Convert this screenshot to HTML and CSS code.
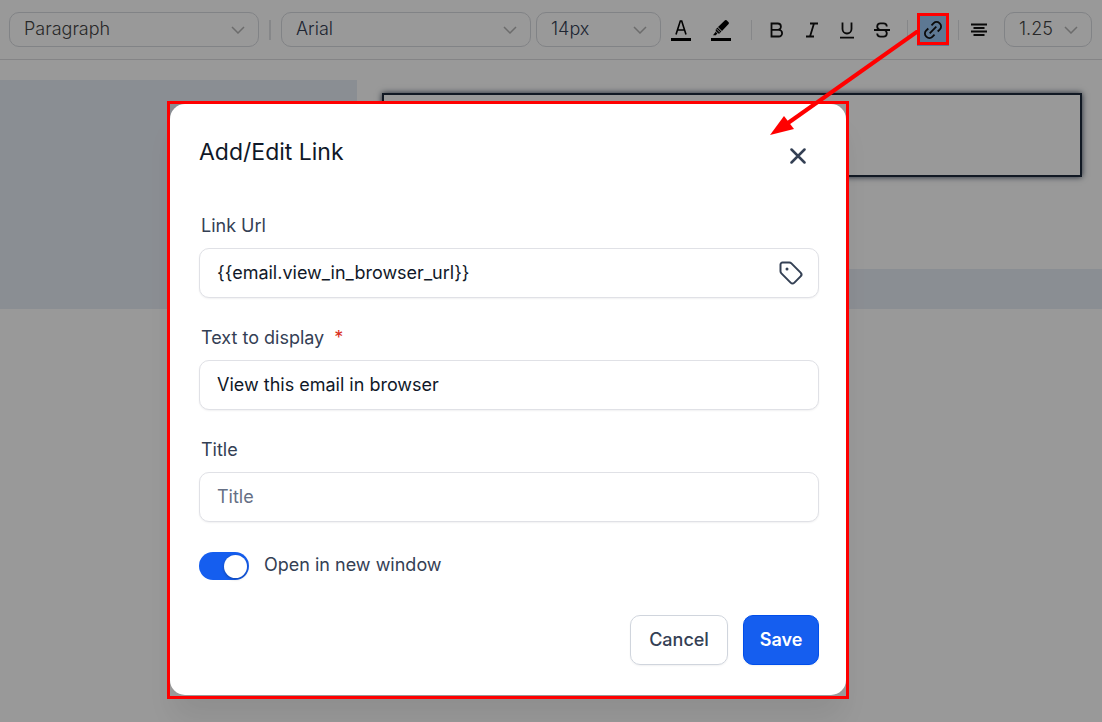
FILE: index.html
```html
<!DOCTYPE html>
<html lang="en">
<head>
<meta charset="utf-8">
<meta name="viewport" content="width=device-width, initial-scale=1">
<title>Add/Edit Link</title>
<link rel="stylesheet" href="styles.css">
</head>
<body>
<div class="toolbar" role="toolbar" aria-label="Text formatting">
  <div class="picker picker-wide">
    <select class="picker-select" aria-label="Block style"><option>Paragraph</option></select>
    <svg class="chevron" viewBox="0 0 14 8"><path d="M1 1l6 6 6-6"/></svg>
  </div>
  <span class="divider divider-block"></span>
  <div class="picker picker-wide">
    <select class="picker-select picker-ink" aria-label="Font family"><option>Arial</option></select>
    <svg class="chevron" viewBox="0 0 14 8"><path d="M1 1l6 6 6-6"/></svg>
  </div>
  <div class="picker picker-size">
    <select class="picker-select picker-ink" aria-label="Font size"><option>14px</option></select>
    <svg class="chevron" viewBox="0 0 14 8"><path d="M1 1l6 6 6-6"/></svg>
  </div>
  <div class="group">
    <button class="tool tool-color" type="button" aria-label="Text color">
      <svg width="20" height="22" viewBox="0 0 20 22"><path d="M5 15.500L9.300 2h1.400L15 15.500M6.600 11h6.800" fill="none" stroke="#000" stroke-width="1.600"/><path d="M0 19h20v3H0z"/></svg>
    </button>
    <button class="tool tool-color" type="button" aria-label="Highlight color">
      <svg width="20" height="22" viewBox="0 0 20 22"><path d="M14 1.300q.8-.8 1.600 0l2 2q.8.8 0 1.600L11 12 7 8z"/><path d="M6.400 8.600l4 4-1.800 2H6.200l-1.300 1.600H2l2.700-3.500V10.400z"/><path d="M5.400 9.800l3.800 3.800M4.300 12l2.700 2.700" stroke="#fff" stroke-width=".9"/><path d="M0 19h20v3H0z"/></svg>
    </button>
  </div>
  <span class="divider divider-marks"></span>
  <div class="group">
    <button class="tool" type="button" aria-label="Bold">
      <svg width="18" height="18" viewBox="0 0 18 18"><path d="M3.500 2.500h6.200a3.200 3.200 0 0 1 0 6.400H3.500zM3.500 8.900h7.300a3.300 3.300 0 0 1 0 6.600H3.500z" class="stroke"/></svg>
    </button>
    <button class="tool" type="button" aria-label="Italic">
      <svg width="18" height="18" viewBox="0 0 18 18"><path d="M7 2.500h8M3 15.500h8M11 2.500l-4 13" class="stroke"/></svg>
    </button>
    <button class="tool" type="button" aria-label="Underline">
      <svg width="18" height="18" viewBox="0 0 18 18"><path d="M4.500 1.500V8a4.500 4.500 0 0 0 9 0V1.500M2 16.700h14" class="stroke"/></svg>
    </button>
    <button class="tool" type="button" aria-label="Strikethrough">
      <svg width="18" height="18" viewBox="0 0 18 18"><path d="M1 9h16M13.800 5.500A3.300 3.300 0 0 0 10.500 2.300H7.500A3.300 3.300 0 0 0 4.200 5.500Q4.200 8 7 9M4.200 12.500A3.300 3.300 0 0 0 7.500 15.700h3a3.300 3.300 0 0 0 3.300-3.200q0-2.500-2.300-3.500" class="stroke"/></svg>
    </button>
  </div>
  <span class="divider divider-link"></span>
  <button class="tool tool-link" type="button" aria-label="Link" aria-pressed="true">
    <svg width="20" height="20" viewBox="0 0 20 20"><path d="M8.500 5.300l2.200-2.200a4 4 0 0 1 5.700 0l.5.500a4 4 0 0 1 0 5.700l-2.200 2.200M5.300 8.500l-2.200 2.200a4 4 0 0 0 0 5.700l.5.500a4 4 0 0 0 5.700 0l2.200-2.200M6.700 13.300l6.600-6.600" class="stroke"/></svg>
  </button>
  <span class="divider divider-align"></span>
  <button class="tool tool-align" type="button" aria-label="Align center">
    <svg width="18" height="18" viewBox="0 0 18 18"><path d="M1 3.500h16M3.500 7h11M1 10.500h16M3.500 14h11" class="stroke"/></svg>
  </button>
  <div class="picker picker-line">
    <select class="picker-select" aria-label="Line height"><option>1.25</option></select>
    <svg class="chevron" viewBox="0 0 14 8"><path d="M1 1l6 6 6-6"/></svg>
  </div>
</div>

<main class="canvas">
  <div class="sheet"><div class="block"></div></div>
</main>

<div class="overlay">
  <div class="frame">
    <form class="dialog" role="dialog" aria-modal="true" aria-labelledby="dialog-title">
      <header class="dialog-head">
        <h1 class="dialog-title" id="dialog-title">Add/Edit Link</h1>
        <button class="close" type="button" aria-label="Close">
          <svg width="16" height="16" viewBox="0 0 16 16"><path d="M1.500 1.500l13 13M14.500 1.500l-13 13"/></svg>
        </button>
      </header>
      <div class="fields">
        <div class="field">
          <label class="label" for="url">Link Url</label>
          <div class="control">
            <input class="input" id="url" type="text" value="{{email.view_in_browser_url}}">
            <button class="tag" type="button" aria-label="Insert merge tag">
              <svg width="26" height="26" viewBox="0 0 26 26"><path d="M2.500 4.500a2 2 0 0 1 2-2h6.800a3 3 0 0 1 2.100.9l9.200 9.200a2.700 2.700 0 0 1 0 3.800l-6.200 6.200a2.700 2.700 0 0 1-3.800 0l-9.200-9.200a3 3 0 0 1-.9-2.100z" fill="none" stroke="#344054" stroke-width="2"/><circle cx="9" cy="9" r="1.500" fill="#344054"/></svg>
            </button>
          </div>
        </div>
        <div class="field">
          <label class="label" for="display">Text to display <span class="required">*</span></label>
          <input class="input" id="display" type="text" value="View this email in browser" required>
        </div>
        <div class="field">
          <label class="label" for="title">Title</label>
          <input class="input" id="title" type="text" placeholder="Title">
        </div>
      </div>
      <div class="switch-row">
        <input class="switch" id="new-window" type="checkbox" role="switch" checked>
        <label class="switch-label" for="new-window">Open in new window</label>
      </div>
      <footer class="actions">
        <button class="button" type="button">Cancel</button>
        <button class="button button-primary" type="submit">Save</button>
      </footer>
    </form>
  </div>
</div>

<div class="link-marker"></div>
<svg class="arrow" width="150" height="106" viewBox="0 0 150 106"><path d="M148 1L18 93" stroke="#f00" stroke-width="4"/><path d="M0 105L14 86l10 13z" fill="#f00"/></svg>
</body>
</html>
```

FILE: styles.css
```css
* { box-sizing: border-box; }

body {
  margin: 0;
  min-height: 100vh;
  background: #fff;
  color: #101828;
  font-family: Inter, "Liberation Sans", sans-serif;
  font-size: 18px;
}

button, input, select { font: inherit; }
button { padding: 0; border: 0; background: none; cursor: pointer; }
svg { display: block; }

/* Toolbar */
.toolbar {
  display: flex;
  align-items: center;
  height: 60px;
  padding: 0 9px;
  border-bottom: 1px solid #dcdde0;
}

.picker { display: grid; align-items: center; flex: none; }
.picker-wide { width: 250px; }
.picker-size { width: 125px; margin-left: 5px; }
.picker-line { width: 88px; margin-left: 10px; }

.picker-select {
  grid-area: 1 / 1;
  width: 100%;
  height: 35px;
  padding: 0 14px 2px;
  border: 1px solid #d8dadf;
  border-radius: 10px;
  background: none;
  color: #444;
  font-weight: 300;
  appearance: none;
}
.picker-ink { color: #344054; }

.chevron {
  grid-area: 1 / 1;
  justify-self: end;
  width: 14px;
  height: 8px;
  margin-right: 14px;
  fill: none;
  stroke: #b4b4b4;
  stroke-width: 1.500;
  pointer-events: none;
}

.divider { flex: none; width: 1px; height: 20px; background: #e0e1e4; }
.divider-block { width: 2px; margin: 0 10px; }
.divider-marks { margin: 0 7px 0 10px; }
.divider-link { margin: 0 9px 0 8px; }
.divider-align { margin: 0 5px 0 9px; }

.group { display: flex; flex: none; }

.tool { display: grid; place-items: center; flex: none; width: 35px; height: 32px; }
.tool-color { width: 40px; }
.tool-link { width: 32px; background: #9cc8f5; }
.tool-align { width: 30px; }

.stroke { fill: none; stroke: #111; stroke-width: 1.800; }

/* Email canvas */
.canvas { margin-top: 20px; padding: 0 0 40px 357px; background: #e7edf5; }
.sheet { padding: 13px 20px 92px 25px; background: #fff; }
.block { height: 84px; border: 2px solid #1d2b3d; box-shadow: 0 0 6px #344054; }

/* Dialog */
.overlay {
  position: fixed;
  inset: 0;
  display: flex;
  justify-content: center;
  align-items: flex-start;
  padding: 101px 86px 20px 0;
  background: rgba(0, 0, 0, .4);
  overflow: hidden;
}

.frame {
  width: 100%;
  max-width: 682px;
  padding-bottom: 1px;
  border: 3px solid #f00;
  box-shadow: 0 25px 30px -5px rgba(0, 10, 5, .08);
}

.dialog { padding: 31px 27px 30px 29px; border-radius: 15px; background: #fff; }

.dialog-head { display: flex; justify-content: space-between; align-items: flex-start; }

.dialog-title { margin: 0; font-size: 23px; font-weight: 400; line-height: 34px; }

.close { display: grid; place-items: center; width: 42px; height: 42px; }
.close path { fill: none; stroke: #344054; stroke-width: 2.500; stroke-linecap: round; }

.fields { display: grid; gap: 30px; margin-top: 39px; }
.field { display: grid; gap: 12px; }

.label, .switch-label { color: #344054; line-height: 20px; }
.label { padding-left: 2px; }
.required { margin-left: 5px; color: #d92d20; }

.control { display: grid; align-items: center; }
.control .input { grid-area: 1 / 1; padding-right: 56px; }

.input {
  width: 100%;
  height: 50px;
  padding: 0 17px 2px;
  border: 1px solid #e0e1e6;
  border-radius: 10px;
  background: #fff;
  box-shadow: 0 1px 2px rgba(16, 24, 40, .06);
  color: #101828;
}
.input::placeholder { color: #667085; opacity: 1; }

.tag { grid-area: 1 / 1; justify-self: end; margin-right: 15px; }

.switch-row { display: flex; align-items: center; gap: 15px; margin-top: 30px; }

.switch {
  display: grid;
  align-items: center;
  justify-items: end;
  width: 50px;
  height: 28px;
  margin: 0;
  padding: 0 2px;
  border-radius: 14px;
  background: #155eef;
  appearance: none;
}
.switch::before {
  content: "";
  width: 23px;
  height: 23px;
  border-radius: 50%;
  background: #fff;
  box-shadow: 0 1px 3px rgba(0, 0, 0, .3);
}
.switch:not(:checked) { justify-items: start; background: #d0d5dd; }

.switch-label { padding-bottom: 2px; }

.actions { display: flex; justify-content: flex-end; gap: 15px; margin-top: 35px; }

.button {
  width: 98px;
  height: 50px;
  padding-bottom: 2px;
  border: 1px solid #d0d5dd;
  border-radius: 10px;
  box-shadow: 0 1px 2px rgba(16, 24, 40, .06);
  color: #344054;
  font-weight: 500;
}
.button-primary { width: 76px; border-color: #004eeb; background: #155eef; color: #fff; font-weight: 600; }

/* Callout marks */
.link-marker {
  position: fixed;
  top: 13px;
  left: 917px;
  width: 32px;
  height: 32px;
  border: 3px solid #f00;
  pointer-events: none;
}

.arrow { position: fixed; top: 30px; left: 770px; pointer-events: none; }
```
